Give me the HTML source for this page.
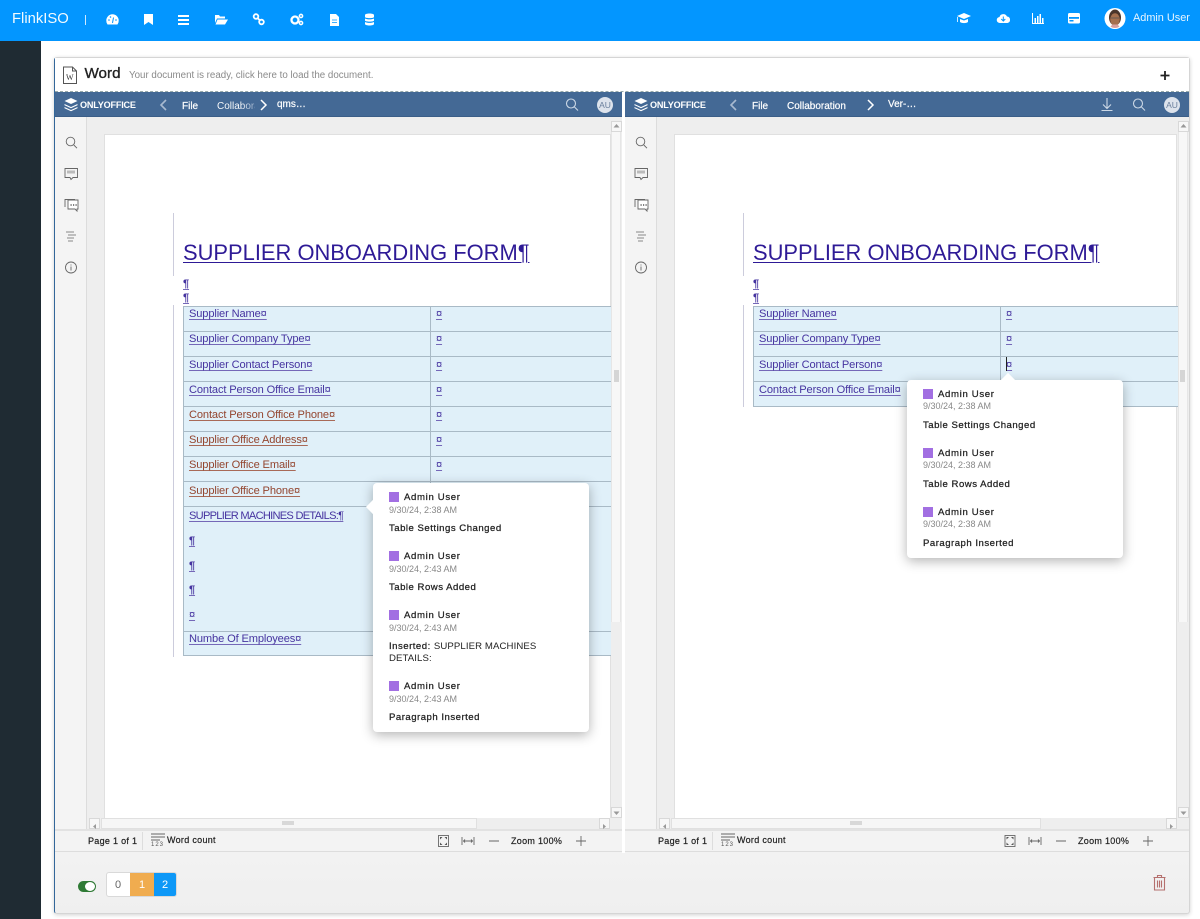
<!DOCTYPE html>
<html><head><meta charset="utf-8"><style>
*{box-sizing:border-box}
html,body{margin:0;padding:0}
body{width:1200px;height:919px;overflow:hidden;position:relative;background:#fff;font-family:"Liberation Sans",sans-serif;color:#222}
.a{position:absolute}
.t{position:absolute;white-space:nowrap}
svg{position:absolute;overflow:visible}
.ow{fill:#fff}
.ln{fill:none;stroke:#fff;stroke-width:1.4}
.cell{position:absolute;white-space:nowrap;font-size:11.1px;letter-spacing:-.13px;line-height:14px;color:#4634a0;text-decoration:underline;text-decoration-color:#7568b8;text-underline-offset:2px;text-decoration-thickness:1px}
.r{color:#93452f;text-decoration-color:#a86a58}
.hl{position:absolute;height:1px;background:#a9bac6}
.tb{font-size:10px;color:#fff;position:absolute;white-space:nowrap;-webkit-text-stroke:.2px #fff}
.st{font-size:9px;letter-spacing:.3px;color:#222;position:absolute;white-space:nowrap;-webkit-text-stroke:.2px #222}
.pop{position:absolute;background:#fff;border-radius:4px;box-shadow:0 3px 12px rgba(0,0,0,.3);z-index:5;width:216px}
.sq{position:absolute;left:16px;width:10px;height:10px;background:#a26fe2}
.nm{position:absolute;left:31px;font-size:9.6px;letter-spacing:.65px;color:#222;white-space:nowrap;-webkit-text-stroke:.25px #222}
.dt{position:absolute;left:16px;font-size:9px;color:#888;white-space:nowrap}
.ms{position:absolute;left:16px;font-size:9.6px;letter-spacing:.49px;color:#222;white-space:nowrap;-webkit-text-stroke:.25px #222}
.tri{position:absolute;width:10px;height:10px;background:#fff;transform:rotate(45deg)}
.sb{position:absolute;width:11px;height:11px;background:#f7f7f7;border:1px solid #d8d8d8}
</style></head><body>

<!-- top bar -->
<div class="a" style="left:0;top:0;width:1200px;height:41px;background:#0396ff"></div>
<div class="t" style="left:12px;top:11px;font-size:14.800px;color:#f2faff">FlinkISO</div>
<div class="a" style="left:85px;top:15px;width:1px;height:10px;background:#cfe9ff"></div>
<svg style="left:0;top:0" width="1200" height="41">
<path class="ow" d="M107.500 24.500a6 6 0 0 1-1.200-4 6.200 6.200 0 0 1 12.400 0 6 6 0 0 1-1.200 4z"/><path d="M112.500 23l1-5.500" stroke="#0396ff" stroke-width="1"/><circle cx="109" cy="20" r=".8" fill="#0396ff"/><circle cx="116" cy="20" r=".8" fill="#0396ff"/><circle cx="110.500" cy="17" r=".8" fill="#0396ff"/>
<path class="ow" d="M144 14h9v11l-4.500-3-4.500 3z"/>
<path class="ow" d="M178 15h11v2h-11zM178 19h11v2h-11zM178 23h11v2h-11z"/>
<path class="ow" d="M215 15h4l1 1.500h5v2h-8l-2 4.500zM217.500 19.500H228l-3 5h-9.500z"/>
<g class="ln" style="stroke-width:1.800"><circle cx="256" cy="16.500" r="2.300"/><circle cx="261.500" cy="22" r="2.300"/><path d="M258 18.500l1.500 1.500"/></g>
<circle cx="295" cy="20" r="3.500" fill="none" stroke="#fff" stroke-width="2.300"/><circle cx="301" cy="16" r="1.600" fill="none" stroke="#fff" stroke-width="1.500"/><circle cx="301" cy="23" r="1.600" fill="none" stroke="#fff" stroke-width="1.500"/>
<path class="ow" d="M330 14h6l3 3v9h-9z"/><path d="M332 20h5M332 22.500h5" stroke="#0396ff" stroke-width=".8"/>
<path class="ow" d="M365 15c0-2 9-2 9 0v2c0 1.500-9 1.500-9 0zM365 18.500c2 1.200 7 1.200 9 0v2c0 1.500-9 1.500-9 0zM365 22c2 1.200 7 1.200 9 0v2c0 2-9 2-9 0z"/>
<path class="ow" d="M964 13l7 3-7 3-7-3zM960 19l4 1.500 4-1.500v3c-2 1.500-6 1.500-8 0zM958 17v5h-.800v-5z"/>
<path class="ow" d="M1000 23a3 3 0 0 1-.500-6 4 4 0 0 1 7.500-.500 3.300 3.300 0 0 1 .500 6.500z"/><path d="M1003.300 16.500v4M1001.300 19l2 2 2-2" stroke="#0396ff" fill="none"/>
<path class="ow" d="M1032 13h1v10h11v1h-12zM1034.500 18h1.500v5h-1.500zM1037 16h1.500v7H1037zM1039.500 14h1.500v9h-1.500zM1042 18h1.500v5H1042z"/>
<rect x="1068" y="13" width="12" height="10.500" rx="1.500" class="ow"/><rect x="1069" y="17" width="10" height="1.800" fill="#0396ff"/><rect x="1069.500" y="20" width="4" height="1.500" fill="#0396ff"/>
<circle cx="1115" cy="18.500" r="10.500" fill="#fff"/>
<ellipse cx="1115" cy="17.500" rx="6" ry="8" fill="#4a352a"/><ellipse cx="1115" cy="19.500" rx="4.800" ry="6.200" fill="#a5704e"/><path d="M1110.500 26.500c2 2 7 2 9 0l-2-2h-5z" fill="#d6a0a0"/>
<path d="M1111 18h8" stroke="#555" stroke-width=".8"/>
</svg>
<div class="t" style="left:1133px;top:11.500px;font-size:10.900px;color:#e8f5ff">Admin User</div>

<!-- sidebar -->
<div class="a" style="left:0;top:41px;width:41px;height:878px;background:#1f2b33"></div>

<!-- card -->
<div class="a" style="left:54px;top:57px;width:1136px;height:857px;background:linear-gradient(#f4f4f4 88%,#efefef);border:1px solid #d5d5d5;border-left:1px solid #33679a;border-radius:3px;box-shadow:0 1px 4px rgba(0,0,0,.18)"></div>
<div class="a" style="left:55px;top:58px;width:1134px;height:34px;background:#fff;border-bottom:1px dashed #9aa"></div>
<div class="a" style="left:622px;top:92px;width:3px;height:761px;background:#fff"></div>
<svg style="left:0;top:0" width="90" height="90"><path d="M63.500 67h9l4 4v12.500h-13z" fill="#fff" stroke="#555"/><path d="M72.500 67v4h4" fill="none" stroke="#555"/></svg>
<div class="t" style="left:66px;top:73px;font-size:8px;color:#333;font-family:'Liberation Serif',serif">W</div>
<div class="t" style="left:84.500px;top:65px;font-size:15.200px;color:#222;-webkit-text-stroke:.35px #222">Word</div>
<div class="t" style="left:129px;top:70px;font-size:9.750px;color:#8a8a8a">Your document is ready, click here to load the document.</div>
<svg style="left:1150px;top:65px" width="30" height="20"><path d="M10.500 10.500h9M15 6v9" stroke="#222" stroke-width="1.800"/></svg>

<!-- LEFT PANE -->
<div class="a" style="left:55px;top:92px;width:567px;height:760px;background:#eee;overflow:hidden">
 <div class="a" style="left:0;top:0;width:567px;height:25px;background:#446995;border-bottom:1px solid #3b5e88"></div>
 <div class="a" style="left:0;top:25px;width:32px;height:712px;background:#f4f4f4;border-right:1px solid #dcdcdc"></div>
 <div class="a" style="left:49px;top:42px;width:507px;height:700px;background:#fff;border:1px solid #e0e0e0"></div>
 <div class="a" style="left:556px;top:25px;width:11px;height:712px;background:#eee"></div>
 <div class="a" style="left:556px;top:29px;width:10px;height:501px;background:#f7f7f7;border-left:1px solid #e6e6e6;border-right:1px solid #e6e6e6"></div>
 <div class="a" style="left:559px;top:278px;width:5px;height:12px;background:#d5d5d5"></div>
 <div class="a" style="left:33px;top:726px;width:523px;height:11px;background:#eee"></div>
 <div class="a" style="left:46px;top:726px;width:376px;height:11px;background:#f6f6f6;border:1px solid #e0e0e0"></div>
 <div class="a" style="left:227px;top:729px;width:12px;height:4px;background:#d8d8d8"></div>
 <div class="sb" style="left:34px;top:726px"></div>
 <div class="sb" style="left:544px;top:726px"></div>
 <div class="sb" style="left:556px;top:29px"></div>
 <div class="sb" style="left:556px;top:715px"></div>
 <div class="a" style="left:0;top:737px;width:567px;height:23px;background:#f3f3f3;border-top:2px solid #e2e2e2;border-bottom:1px solid #ddd"></div>
</div>
<!-- RIGHT PANE -->
<div class="a" style="left:625px;top:92px;width:564px;height:760px;background:#eee;overflow:hidden">
 <div class="a" style="left:0;top:0;width:564px;height:25px;background:#446995;border-bottom:1px solid #3b5e88"></div>
 <div class="a" style="left:0;top:25px;width:32px;height:712px;background:#f4f4f4;border-right:1px solid #dcdcdc"></div>
 <div class="a" style="left:49px;top:42px;width:503px;height:700px;background:#fff;border:1px solid #e0e0e0"></div>
 <div class="a" style="left:552px;top:25px;width:12px;height:712px;background:#eee"></div>
 <div class="a" style="left:553px;top:29px;width:10px;height:501px;background:#f7f7f7;border-left:1px solid #e6e6e6;border-right:1px solid #e6e6e6"></div>
 <div class="a" style="left:555px;top:278px;width:5px;height:12px;background:#d5d5d5"></div>
 <div class="a" style="left:33px;top:726px;width:520px;height:11px;background:#eee"></div>
 <div class="a" style="left:46px;top:726px;width:370px;height:11px;background:#f6f6f6;border:1px solid #e0e0e0"></div>
 <div class="a" style="left:225px;top:729px;width:12px;height:4px;background:#d8d8d8"></div>
 <div class="sb" style="left:34px;top:726px"></div>
 <div class="sb" style="left:541px;top:726px"></div>
 <div class="sb" style="left:553px;top:29px"></div>
 <div class="sb" style="left:553px;top:715px"></div>
 <div class="a" style="left:0;top:737px;width:564px;height:23px;background:#f3f3f3;border-top:2px solid #e2e2e2;border-bottom:1px solid #ddd"></div>
</div>
<!-- scroll arrows -->
<svg style="left:0;top:0;z-index:2" width="1200" height="919"><g fill="#999">
<path d="M93 826.500l3-2.500v5zM663 826.500l3-2.500v5zM606 826.500l-3-2.500v5zM1173 826.500l-3-2.500v5z"/>
<path d="M616.500 124l-3 3.500h6zM1183.500 124l-3 3.500h6zM616.500 815l-3-3.500h6zM1183.500 815l-3-3.500h6z"/>
</g></svg>

<!-- toolbars -->
<svg style="left:0;top:0" width="1200" height="130">
<path class="ow" d="M71 98l6.500 3-6.500 3-6.500-3zM64.500 104l6.500 3 6.500-3v1.200L71 108.200l-6.500-3zM64.500 107l6.500 3 6.500-3v1.200l-6.500 3-6.500-3z"/>
<path class="ow" d="M641 98l6.500 3-6.500 3-6.500-3zM634.500 104l6.500 3 6.500-3v1.200l-6.500 3-6.500-3zM634.500 107l6.500 3 6.500-3v1.200l-6.500 3-6.500-3z"/>
<path d="M166 100l-5 5 5 5" fill="none" stroke="#a9bad0" stroke-width="1.600"/>
<path d="M736 100l-5 5 5 5" fill="none" stroke="#a9bad0" stroke-width="1.600"/>
<path d="M261 100l5 5-5 5" fill="none" stroke="#fff" stroke-width="1.500"/>
<path d="M868 100l5 5-5 5" fill="none" stroke="#fff" stroke-width="1.500"/>
<g fill="none" stroke="#ccd8e6" stroke-width="1.100"><circle cx="571" cy="103.500" r="4.500"/><path d="M574.500 107l3.500 3.500"/><circle cx="1138" cy="103.500" r="4.500"/><path d="M1141.500 107l3.500 3.500"/>
<path d="M1107 98v10M1103 104.500l4 4 4-4M1101.500 110.500h11"/></g>
<circle cx="605" cy="105" r="8" fill="#dde3ec"/><circle cx="1172" cy="105" r="8" fill="#dde3ec"/>
</svg>
<div class="t" style="left:80px;top:99.500px;font-size:9.100px;font-weight:bold;color:#fff;letter-spacing:-.2px">ONLYOFFICE</div>
<div class="t" style="left:650px;top:99.500px;font-size:9.100px;font-weight:bold;color:#fff;letter-spacing:-.2px">ONLYOFFICE</div>
<div class="tb" style="left:182px;top:101px">File</div>
<div class="tb" style="left:217px;top:101px;width:38px;overflow:hidden;background:linear-gradient(90deg,#fff 60%,#8ea5c3);-webkit-background-clip:text;color:transparent;-webkit-text-stroke:0">Collaboration</div>
<div class="tb" style="left:277px;top:99px">qms…</div>
<div class="tb" style="left:752px;top:101px">File</div>
<div class="tb" style="left:787px;top:101px">Collaboration</div>
<div class="tb" style="left:888px;top:99px">Ver-…</div>
<div class="t" style="left:597px;top:100px;width:16px;text-align:center;font-size:8.500px;color:#6a7f9c">AU</div>
<div class="t" style="left:1164px;top:100px;width:16px;text-align:center;font-size:8.500px;color:#6a7f9c">AU</div>

<!-- left rail icons -->
<svg style="left:0;top:130px" width="700" height="150">
<g fill="none" stroke="#666" stroke-width=".9">
<circle cx="70.500" cy="11.500" r="4.300"/><path d="M73.800 15l3.200 3.200"/>
<path d="M65 38.500h12.500v9H73l-2 2-1-2h-5z"/><path d="M67 40.500h8v3h-8z" fill="#bbb" stroke="none"/>
<path d="M68 73v-3h10v9h-1v2l-2-2h-7z" fill="#fff"/><path d="M65 77v-7.500h10" /><path d="M70.500 75h1.200M73 75h1.200M75.500 75h1.200" stroke="#333" stroke-width="1.200"/>
<path d="M67 232.500" /><path d="M66 102h8M68 105h8M67 108h7M68 111h5" stroke="#888"/>
<circle cx="71" cy="137.500" r="5.500"/><path d="M71 134.500v1M71 136.500v4"/>
</g>
<g fill="none" stroke="#666" stroke-width=".9">
<circle cx="640.500" cy="11.500" r="4.300"/><path d="M643.800 15l3.200 3.200"/>
<path d="M635 38.500h12.500v9H643l-2 2-1-2h-5z"/><path d="M637 40.500h8v3h-8z" fill="#bbb" stroke="none"/>
<path d="M638 73v-3h10v9h-1v2l-2-2h-7z" fill="#fff"/><path d="M635 77v-7.500h10" /><path d="M640.500 75h1.200M643 75h1.200M645.500 75h1.200" stroke="#333" stroke-width="1.200"/>
<path d="M636 102h8M638 105h8M637 108h7M638 111h5" stroke="#888"/>
<circle cx="641" cy="137.500" r="5.500"/><path d="M641 134.500v1M641 136.500v4"/>
</g>
</svg>

<!-- LEFT DOC -->
<div class="a" style="left:173px;top:213px;width:1px;height:63px;background:#ccccdc"></div>
<div class="a" style="left:173px;top:305px;width:1px;height:352px;background:#ccccdc"></div>
<div class="t" style="left:183px;top:240px;font-size:21.920px;line-height:25px;color:#2e1a96;text-decoration:underline;text-decoration-thickness:1px;text-underline-offset:2px">SUPPLIER ONBOARDING FORM¶</div>
<div class="cell" style="left:183px;top:277px;font-weight:bold">¶</div>
<div class="cell" style="left:183px;top:291px;font-weight:bold">¶</div>
<div class="a" style="left:183px;top:306px;width:428px;height:350px;background:#e0f0f9;border:1px solid #a9bac6;border-right:0"></div>
<div class="a" style="left:430px;top:306px;width:1px;height:200px;background:#a9bac6"></div>
<div class="hl" style="left:183px;top:331px;width:428px"></div><div class="hl" style="left:183px;top:356px;width:428px"></div><div class="hl" style="left:183px;top:381px;width:428px"></div><div class="hl" style="left:183px;top:406px;width:428px"></div><div class="hl" style="left:183px;top:431px;width:428px"></div><div class="hl" style="left:183px;top:456px;width:428px"></div><div class="hl" style="left:183px;top:481px;width:428px"></div><div class="hl" style="left:183px;top:506px;width:428px"></div><div class="hl" style="left:183px;top:631px;width:428px"></div>
<div class="cell" style="left:189px;top:307px">Supplier Name¤</div><div class="cell" style="left:436px;top:307px">¤</div>
<div class="cell" style="left:189px;top:332px">Supplier Company Type¤</div><div class="cell" style="left:436px;top:332px">¤</div>
<div class="cell" style="left:189px;top:358px">Supplier Contact Person¤</div><div class="cell" style="left:436px;top:358px">¤</div>
<div class="cell" style="left:189px;top:383px">Contact Person Office Email¤</div><div class="cell" style="left:436px;top:383px">¤</div>
<div class="cell r" style="left:189px;top:408px">Contact Person Office Phone¤</div><div class="cell" style="left:436px;top:408px">¤</div>
<div class="cell r" style="left:189px;top:433px">Supplier Office Address¤</div><div class="cell" style="left:436px;top:433px">¤</div>
<div class="cell r" style="left:189px;top:458px">Supplier Office Email¤</div><div class="cell" style="left:436px;top:458px">¤</div>
<div class="cell r" style="left:189px;top:484px">Supplier Office Phone¤</div>
<div class="cell" style="left:189px;top:509px;letter-spacing:-.73px">SUPPLIER MACHINES DETAILS:¶</div>
<div class="cell" style="left:189px;top:534px;font-weight:bold">¶</div>
<div class="cell" style="left:189px;top:559px;font-weight:bold">¶</div>
<div class="cell" style="left:189px;top:583px;font-weight:bold">¶</div>
<div class="cell" style="left:189px;top:608px">¤</div>
<div class="cell" style="left:189px;top:632px">Numbe Of Employees¤</div>

<!-- RIGHT DOC -->
<div class="a" style="left:743px;top:213px;width:1px;height:63px;background:#ccccdc"></div>
<div class="a" style="left:743px;top:305px;width:1px;height:102px;background:#ccccdc"></div>
<div class="t" style="left:753px;top:240px;font-size:21.920px;line-height:25px;color:#2e1a96;text-decoration:underline;text-decoration-thickness:1px;text-underline-offset:2px">SUPPLIER ONBOARDING FORM¶</div>
<div class="cell" style="left:753px;top:277px;font-weight:bold">¶</div>
<div class="cell" style="left:753px;top:291px;font-weight:bold">¶</div>
<div class="a" style="left:753px;top:306px;width:425px;height:101px;background:#e0f0f9;border:1px solid #a9bac6;border-right:0"></div>
<div class="a" style="left:1000px;top:306px;width:1px;height:101px;background:#a9bac6"></div>
<div class="hl" style="left:753px;top:331px;width:425px"></div><div class="hl" style="left:753px;top:356px;width:425px"></div><div class="hl" style="left:753px;top:381px;width:425px"></div>
<div class="cell" style="left:759px;top:307px">Supplier Name¤</div><div class="cell" style="left:1006px;top:307px">¤</div>
<div class="cell" style="left:759px;top:332px">Supplier Company Type¤</div><div class="cell" style="left:1006px;top:332px">¤</div>
<div class="cell" style="left:759px;top:358px">Supplier Contact Person¤</div><div class="cell" style="left:1006px;top:358px">¤</div>
<div class="cell" style="left:759px;top:383px">Contact Person Office Email¤</div>
<div class="a" style="left:1006px;top:357px;width:1px;height:14px;background:#222"></div>

<!-- popups -->
<div class="pop" style="left:373px;top:483px;height:249px">
<div class="tri" style="left:-5px;top:19px"></div>
<div class="sq" style="top:9px"></div><div class="nm" style="top:8.500px">Admin User</div><div class="dt" style="top:22px">9/30/24, 2:38 AM</div><div class="ms" style="top:40px">Table Settings Changed</div>
<div class="sq" style="top:68px"></div><div class="nm" style="top:67.500px">Admin User</div><div class="dt" style="top:81px">9/30/24, 2:43 AM</div><div class="ms" style="top:99px">Table Rows Added</div>
<div class="sq" style="top:127px"></div><div class="nm" style="top:126.500px">Admin User</div><div class="dt" style="top:140px">9/30/24, 2:43 AM</div><div class="ms" style="top:158px;line-height:11.500px">Inserted: <span style="font-weight:normal;-webkit-text-stroke:0;letter-spacing:.1px">SUPPLIER MACHINES<br>DETAILS:</span></div>
<div class="sq" style="top:198px"></div><div class="nm" style="top:197.500px">Admin User</div><div class="dt" style="top:211px">9/30/24, 2:43 AM</div><div class="ms" style="top:229px">Paragraph Inserted</div>
</div>
<div class="pop" style="left:907px;top:380px;height:178px">
<div class="tri" style="left:96px;top:-5px"></div>
<div class="sq" style="top:9px"></div><div class="nm" style="top:8.500px">Admin User</div><div class="dt" style="top:21px">9/30/24, 2:38 AM</div><div class="ms" style="top:40px">Table Settings Changed</div>
<div class="sq" style="top:68px"></div><div class="nm" style="top:67.500px">Admin User</div><div class="dt" style="top:80px">9/30/24, 2:38 AM</div><div class="ms" style="top:99px">Table Rows Added</div>
<div class="sq" style="top:127px"></div><div class="nm" style="top:126.500px">Admin User</div><div class="dt" style="top:139px">9/30/24, 2:38 AM</div><div class="ms" style="top:158px">Paragraph Inserted</div>
</div>

<!-- status bars -->
<div class="st" style="left:88px;top:836px">Page 1 of 1</div>
<div class="st" style="left:658px;top:836px">Page 1 of 1</div>
<div class="st" style="left:167px;top:835px">Word count</div>
<div class="st" style="left:737px;top:835px">Word count</div>
<div class="st" style="left:511px;top:836px">Zoom 100%</div>
<div class="st" style="left:1078px;top:836px">Zoom 100%</div>
<div class="a" style="left:142px;top:832px;width:1px;height:18px;background:#ddd"></div>
<div class="a" style="left:712px;top:832px;width:1px;height:18px;background:#ddd"></div>
<svg style="left:0;top:825px" width="1200" height="30">
<g fill="none" stroke="#666" stroke-width=".9">
<path d="M151 9h14M151 12h14M151 15h9"/><path d="M721 9h14M721 12h14M721 15h9"/>
<rect x="438.500" y="10.500" width="10" height="11"/><rect x="1005" y="10.500" width="10" height="11"/>
<path d="M462 12v8M474 12v8M464 16h8M465 14.500l-1.500 1.500 1.500 1.500M471 14.500l1.500 1.500-1.500 1.500"/>
<path d="M1029 12v8M1041 12v8M1031 16h8M1032 14.500l-1.500 1.500 1.500 1.500M1038 14.500l1.500 1.500-1.500 1.500"/>
<path d="M489 16h10M1056 16h10M576 16h10M581 11v10M1143 16h10M1148 11v10"/>
</g>
<g fill="#555"><path d="M440 12h2.500l-2.500 2.500zM447 12h-2.500l2.500 2.500zM440 20h2.500l-2.500-2.500zM447 20h-2.500l2.500-2.500zM1006.500 12h2.500l-2.500 2.500zM1013.500 12h-2.500l2.500 2.500zM1006.500 20h2.500l-2.500-2.500zM1013.500 20h-2.500l2.500-2.500z"/></g>
</svg>
<div class="t" style="left:151px;top:842px;font-size:6px;letter-spacing:1px;color:#555">123</div>
<div class="t" style="left:721px;top:842px;font-size:6px;letter-spacing:1px;color:#555">123</div>

<!-- footer -->
<div class="a" style="left:78px;top:881px;width:18px;height:11px;background:#2f7a35;border-radius:6px"></div>
<div class="a" style="left:85px;top:882px;width:10px;height:9px;background:#fff;border-radius:50%"></div>
<div class="a" style="left:106px;top:872px;width:71px;height:25px;border:1px solid #d9d9d9;border-radius:3px;background:#fff;overflow:hidden">
<div class="a" style="left:23px;top:0;width:24px;height:23px;background:#f0ac4f"></div>
<div class="a" style="left:47px;top:0;width:23px;height:23px;background:#0d98f7"></div>
<div class="t" style="left:8px;top:6px;font-size:11px;color:#666">0</div>
<div class="t" style="left:32px;top:6px;font-size:11px;color:#fff">1</div>
<div class="t" style="left:55px;top:6px;font-size:11px;color:#fff">2</div>
</div>
<svg style="left:1150px;top:873px" width="20" height="20" fill="none" stroke="#b5706e" stroke-width="1.100"><path d="M4.500 5v12h10V5M3.500 4.500h12M7.500 4V2.500h4V4M7.500 7.500v7M9.500 7.500v7M11.500 7.500v7"/></svg>
</body></html>
